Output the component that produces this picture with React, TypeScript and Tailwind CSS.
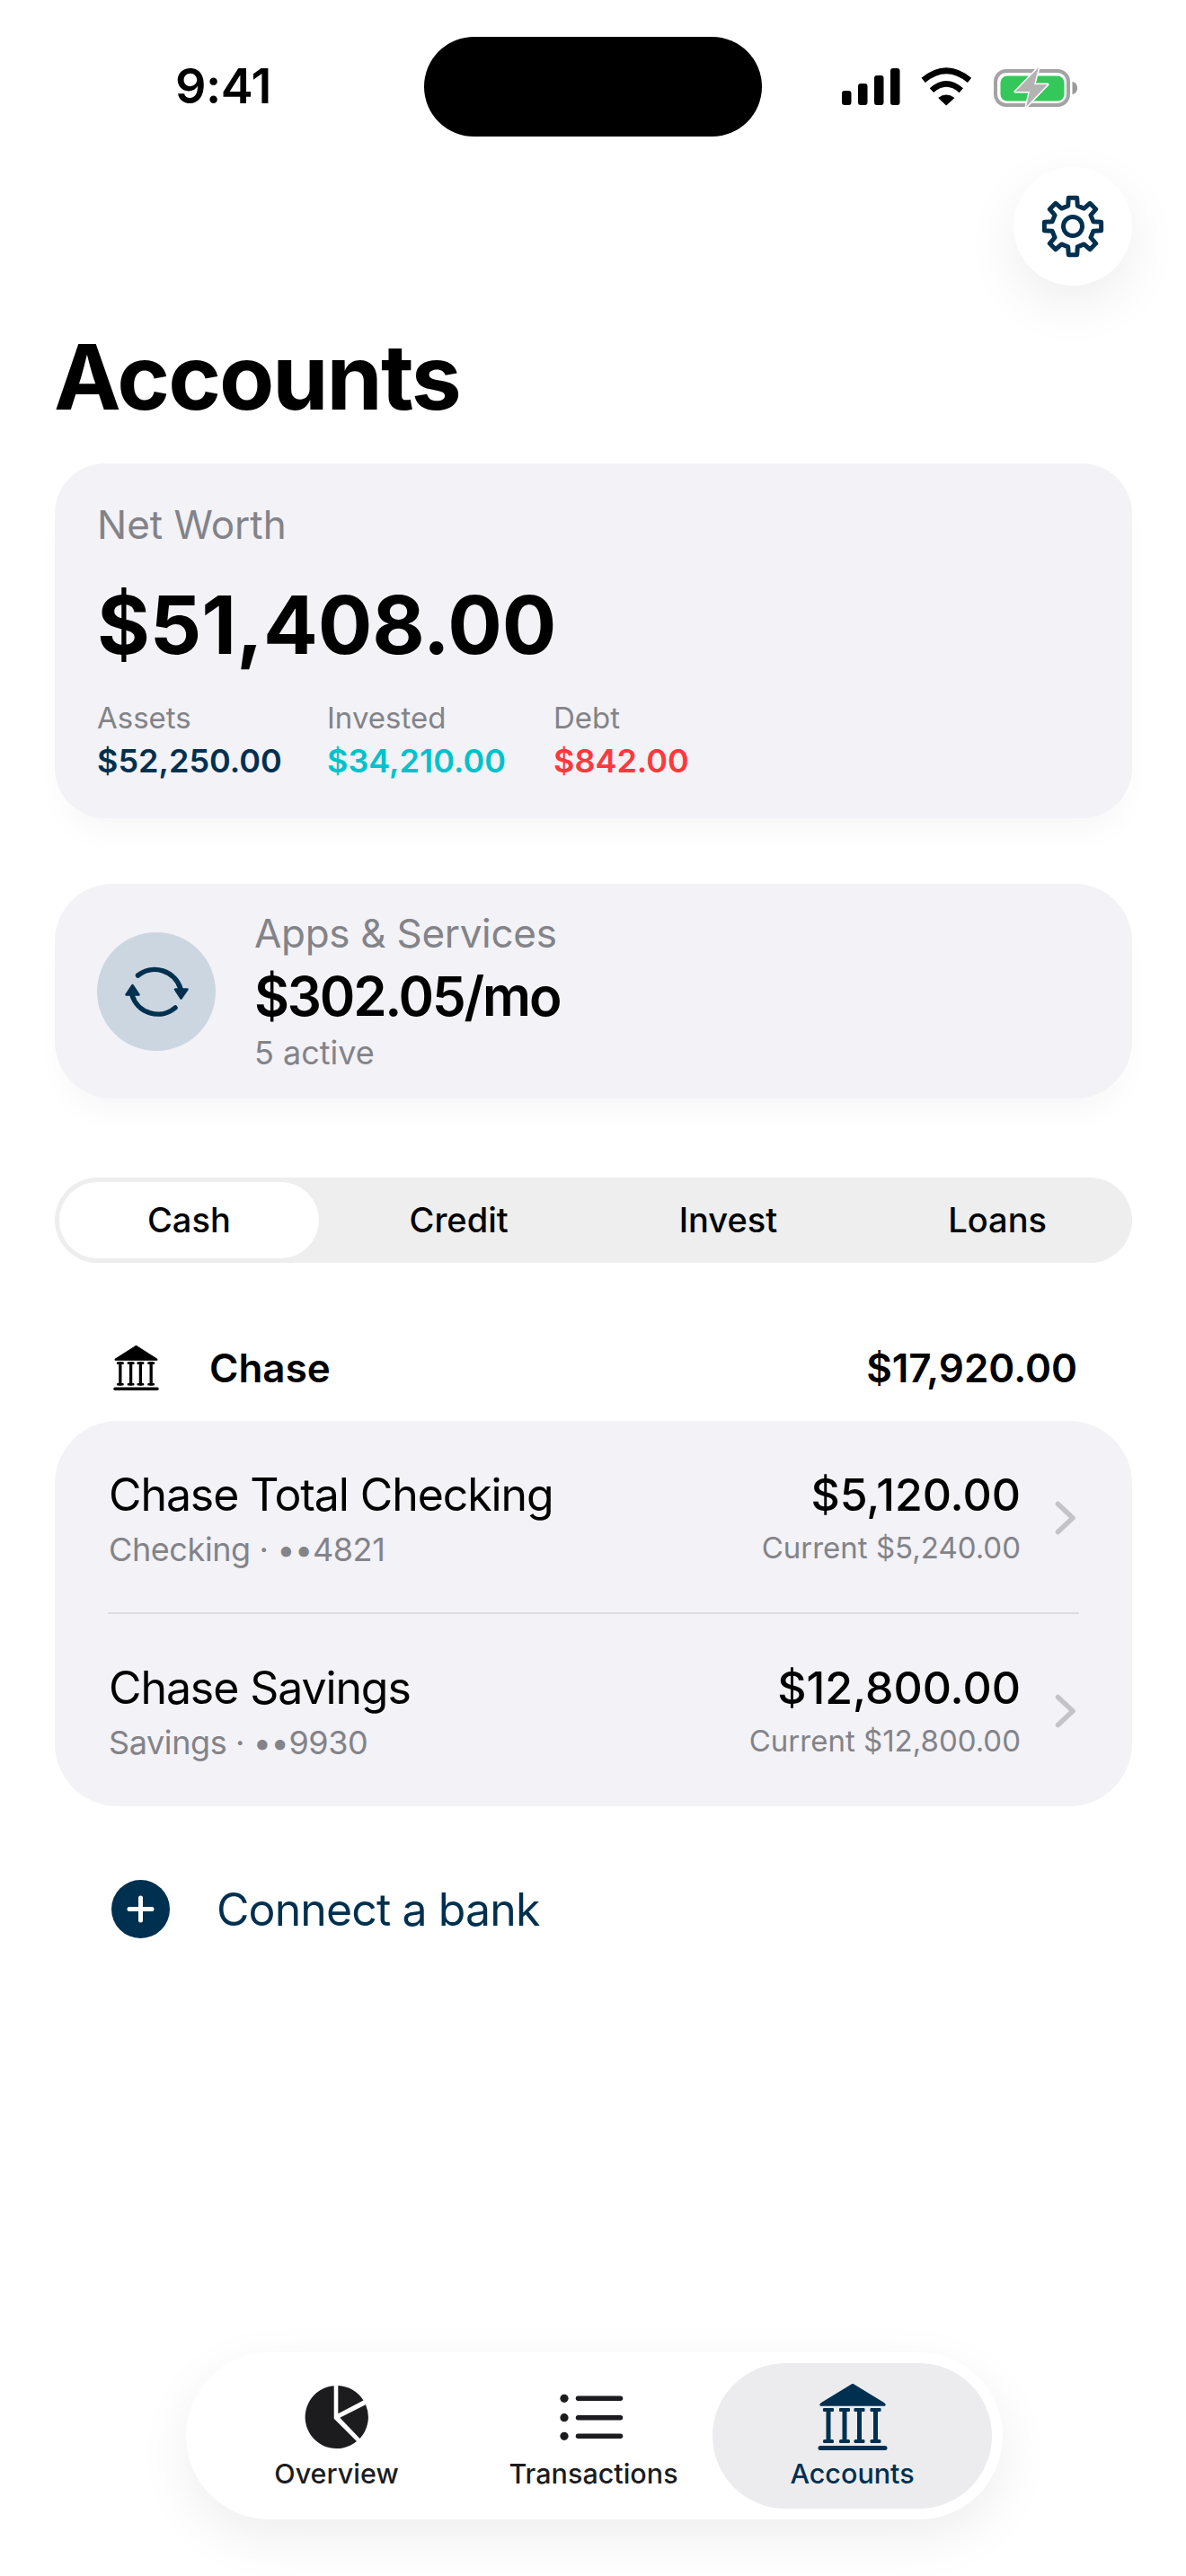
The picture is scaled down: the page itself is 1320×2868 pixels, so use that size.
import React from "react";

const NAVY = "#00304f";

function gearPath() {
  const cx = 40, cy = 40, r1 = 23.5, R = 32;
  const pts: string[] = [];
  for (let i = 0; i < 8; i++) {
    const a = (i * 45 - 90) * (Math.PI / 180);
    const d1 = (13 * Math.PI) / 180, d2 = (8.5 * Math.PI) / 180;
    const p = (rad: number, ang: number) => `${(cx + rad * Math.cos(ang)).toFixed(2)} ${(cy + rad * Math.sin(ang)).toFixed(2)}`;
    pts.push(`${i === 0 ? "M" : "L"}${p(r1, a - d1)}`, `L${p(R, a - d2)}`, `L${p(R, a + d2)}`, `L${p(r1, a + d1)}`);
  }
  return pts.join(" ") + " Z";
}

function Gear() {
  return (
    <svg width="80" height="80" viewBox="0 0 80 80" fill="none" stroke={NAVY} strokeWidth="5" strokeLinejoin="round">
      <path d={gearPath()} />
      <circle cx="40" cy="40" r="10.5" />
    </svg>
  );
}

function Bank({ color, className }: { color: string; className: string }) {
  return (
    <svg className={className} viewBox="0 0 78 74" fill={color} preserveAspectRatio="none">
      <path d="M39 0.5 L74 22 Q75.5 23.5 74.5 24 H3.5 Q2.5 23.5 4 22 Z" stroke={color} strokeWidth="1.5" strokeLinejoin="round" />
      {[12, 30, 46.5, 64.5].map((x) => (
        <g key={x}>
          <rect x={x - 2.5} y="27" width="5" height="39" />
          <rect x={x - 6} y="27" width="12" height="4" rx="1" />
          <rect x={x - 6} y="62" width="12" height="4" rx="1.5" />
        </g>
      ))}
      <rect x="0.5" y="69" width="77" height="5" rx="2.5" />
    </svg>
  );
}

function Pie() {
  return (
    <svg width="80" height="80" viewBox="0 0 80 80" fill="#1c1c1e">
      <path d="M36.7 41.7 L36.7 5.2 A35 35 0 1 0 62 67 Z" />
      <path d="M41.3 36.3 L41.3 5 A35 35 0 0 1 69.5 21.5 Z" />
      <path d="M43.3 40.7 L72 26.3 A35 35 0 0 1 65.5 64 Z" />
    </svg>
  );
}

function ListIcon() {
  return (
    <svg width="75" height="60" viewBox="0 0 75 60" fill="#1c1c1e" stroke="#1c1c1e">
      {[9.3, 30.7, 51.3].map((y) => (
        <g key={y}>
          <circle cx="5" cy={y} r="4.6" stroke="none" />
          <line x1="20.5" y1={y} x2="67.5" y2={y} strokeWidth="5.5" strokeLinecap="round" />
        </g>
      ))}
    </svg>
  );
}

function Refresh() {
  return (
    <svg viewBox="8 8 132 132" className="h-[132px] w-[132px]" fill={NAVY}>
      <path d="M53.5 56 A30 30 0 0 1 101 71" fill="none" stroke={NAVY} strokeWidth="5.5" strokeLinecap="round" />
      <path d="M95 71.5 L108.5 71.5 L101.5 81.5 Z" stroke={NAVY} strokeWidth="2.5" strokeLinejoin="round" />
      <path d="M95 92 A30 30 0 0 1 47 78" fill="none" stroke={NAVY} strokeWidth="5.5" strokeLinecap="round" />
      <path d="M40.5 77.5 L54.5 77.5 L47.5 67 Z" stroke={NAVY} strokeWidth="2.5" strokeLinejoin="round" />
    </svg>
  );
}

function Chevron() {
  return (
    <svg width="24" height="38" viewBox="0 0 24 38" fill="none" stroke="#c4c4c7" strokeWidth="5.5" strokeLinecap="round" strokeLinejoin="round">
      <path d="M3.5 3.5 L20 19 L3.5 34.5" />
    </svg>
  );
}

function Signal() {
  return (
    <svg width="65" height="41" viewBox="0 0 65 41" fill="#000">
      <rect x="0" y="25" width="10.5" height="16" rx="3" />
      <rect x="18" y="17" width="10.5" height="24" rx="3" />
      <rect x="36" y="8" width="10.5" height="33" rx="3" />
      <rect x="54" y="0" width="10.5" height="41" rx="3" />
    </svg>
  );
}

function Wifi() {
  return (
    <svg width="58" height="45" viewBox="375 100 175 135" fill="none" stroke="#000" strokeWidth="20">
      <path d="M383 146 Q460 82 538 146" />
      <path d="M411 180 Q460 136 510 180" />
      <path d="M460 231 L433 205 Q460 184 488 205 Z" fill="#000" stroke="none" />
    </svg>
  );
}

function Battery() {
  return (
    <svg width="94" height="46" viewBox="0 0 94 46">
      <rect x="2" y="5" width="81" height="38" rx="12" fill="none" stroke="#a3a3a3" strokeWidth="4" />
      <rect x="7.5" y="10.5" width="71" height="28" rx="7.5" fill="#34c759" />
      <path d="M87.5 17 C91 17.5 93 20 93 24 C93 28 91 30.5 87.5 31 Z" fill="#9a9a9a" />
      <path d="M50 1 L24 28 H40 L36 45 L60 20 H45 Z" fill="#b3b3b3" stroke="#fff" strokeWidth="3" strokeLinejoin="round" paintOrder="stroke" />
    </svg>
  );
}

function Row({ name, sub, amount, current }: { name: string; sub: string; amount: string; current: string }) {
  return (
    <div className="flex h-[213px] items-start pl-[60px] pr-[62px] pt-[52px]">
      <div className="flex-1">
        <div className="text-[50px] leading-[60px] -tracking-[1.1px] text-black">{name}</div>
        <div className="mt-[9px] text-[36px] leading-[44px] -tracking-[0.4px] text-[#838388]">{sub}</div>
      </div>
      <div className="text-right">
        <div className="text-[50px] font-medium leading-[60px] text-black">{amount}</div>
        <div className="mt-[7px] text-[33px] leading-[44px] text-[#838388]">{current}</div>
      </div>
      <div className="ml-[38px] mt-[37px]">
        <Chevron />
      </div>
    </div>
  );
}

function Stat({ label, value, color, w }: { label: string; value: string; color: string; w: string }) {
  return (
    <div className={w}>
      <div className="text-[33px] leading-[40px] text-[#838388]">{label}</div>
      <div className={`mt-[6px] text-[36px] font-semibold leading-[44px] ${color}`}>{value}</div>
    </div>
  );
}

function NavTab({ label, active, children }: { label: string; active?: boolean; children: React.ReactNode }) {
  return (
    <div className={`flex h-[162px] w-[311px] flex-col items-center rounded-full pt-[20px] ${active ? "-ml-[23px] bg-[#ececee] text-[#00304f]" : "text-[#1c1c1e]"}`}>
      <div className="flex h-[80px] items-center justify-center">{children}</div>
      <div className="mt-[3px] text-[30.5px] font-medium leading-[40px]">{label}</div>
    </div>
  );
}

export default function App() {
  return (
    <div className="relative flex h-[2868px] w-[1320px] flex-col overflow-hidden bg-white font-['Inter',sans-serif] text-black">
      <div className="flex h-[152px] items-center pl-[195px] pt-[41px]">
        <div className="w-[277px] -translate-y-[1px] text-[54px] font-semibold leading-[64px] -tracking-[0.5px]">9:41</div>
        <div className="h-[111px] w-[376px] rounded-full bg-black" />
        <div className="ml-[89px] flex items-center gap-[23px]">
          <Signal />
          <Wifi />
          <Battery />
        </div>
      </div>

      <div className="mt-[34px] flex justify-end pr-[60px]">
        <div className="flex h-[132px] w-[132px] items-center justify-center rounded-full bg-white shadow-[0_20px_60px_rgba(0,0,0,0.07)]">
          <Gear />
        </div>
      </div>

      <h1 className="ml-[60px] mt-[52px] text-[100px] font-bold leading-[100px] -tracking-[2px]">Accounts</h1>

      <div className="ml-[61px] mr-[60px] mt-[46px] h-[395px] rounded-[56px] bg-[#f2f2f7] pl-[47px] pt-[42px] shadow-[0_24px_32px_-8px_rgba(0,0,0,0.03)]">
        <div className="text-[44px] leading-[52px] text-[#838388]">Net Worth</div>
        <div className="mt-[36px] text-[90px] font-bold leading-[100px] -tracking-[0.1px]">$51,408.00</div>
        <div className="mt-[33px] flex">
          <Stat w="w-[256px]" label="Assets" value="$52,250.00" color="text-[#00304f]" />
          <Stat w="w-[252px]" label="Invested" value="$34,210.00" color="text-[#00c2cc]" />
          <Stat w="w-[252px]" label="Debt" value="$842.00" color="text-[#ff383c]" />
        </div>
      </div>

      <div className="ml-[61px] mr-[60px] mt-[73px] flex h-[239px] items-center rounded-[64px] bg-[#f2f2f7] pl-[47px] shadow-[0_24px_32px_-8px_rgba(0,0,0,0.03)]">
        <div className="flex h-[132px] w-[132px] items-center justify-center rounded-full bg-[#ccd6e0]">
          <Refresh />
        </div>
        <div className="ml-[43px]">
          <div className="text-[44px] leading-[52px] -tracking-[0.3px] text-[#838388]">Apps &amp; Services</div>
          <div className="mt-[10px] text-[60px] font-semibold leading-[68px] -tracking-[2.2px]">$302.05/mo</div>
          <div className="mt-[7px] text-[36px] leading-[44px] text-[#838388]">5 active</div>
        </div>
      </div>

      <div className="ml-[61px] mr-[60px] mt-[88px] grid h-[95px] grid-cols-4 items-stretch rounded-full bg-[#eeeeee] py-[5px] text-[38px] font-medium">
        <div className="ml-[5px] mr-[6px] flex items-center justify-center rounded-full bg-white">Cash</div>
        <div className="flex items-center justify-center">Credit</div>
        <div className="flex items-center justify-center">Invest</div>
        <div className="flex items-center justify-center">Loans</div>
      </div>

      <div className="mt-[64px] flex h-[106px] items-center pl-[126px] pr-[121px] text-[44px] font-semibold">
        <Bank color="#000" className="h-[50px] w-[51px]" />
        <div className="ml-[56px] flex-1">Chase</div>
        <div>$17,920.00</div>
      </div>

      <div className="ml-[61px] mr-[60px] mt-[6px] h-[429px] rounded-[70px] bg-[#f2f2f7]">
        <Row name="Chase Total Checking" sub="Checking · ••4821" amount="$5,120.00" current="Current $5,240.00" />
        <div className="mx-[59px] h-[2px] bg-[#dcdce1]" />
        <Row name="Chase Savings" sub="Savings · ••9930" amount="$12,800.00" current="Current $12,800.00" />
      </div>

      <div className="ml-[124px] mt-[82px] flex items-center">
        <div className="flex h-[65px] w-[65px] items-center justify-center rounded-full bg-[#00304f]">
          <svg width="31" height="31" viewBox="0 0 31 31" stroke="#fff" strokeWidth="5" strokeLinecap="round">
            <path d="M15.5 3 V28 M3 15.5 H28" />
          </svg>
        </div>
        <div className="ml-[52px] text-[50px] leading-[64px] -tracking-[0.9px] text-[#00304f]">Connect a bank</div>
      </div>

      <div className="absolute bottom-[63px] left-[207px] flex h-[186px] w-[909px] items-center rounded-full bg-white px-[12px] shadow-[0_20px_60px_rgba(0,0,0,0.07)]">
        <NavTab label="Overview">
          <Pie />
        </NavTab>
        <div className="-ml-[25px]">
          <NavTab label="Transactions">
            <ListIcon />
          </NavTab>
        </div>
        <NavTab label="Accounts" active>
          <Bank color="#00304f" className="h-[74px] w-[78px]" />
        </NavTab>
      </div>
    </div>
  );
}
